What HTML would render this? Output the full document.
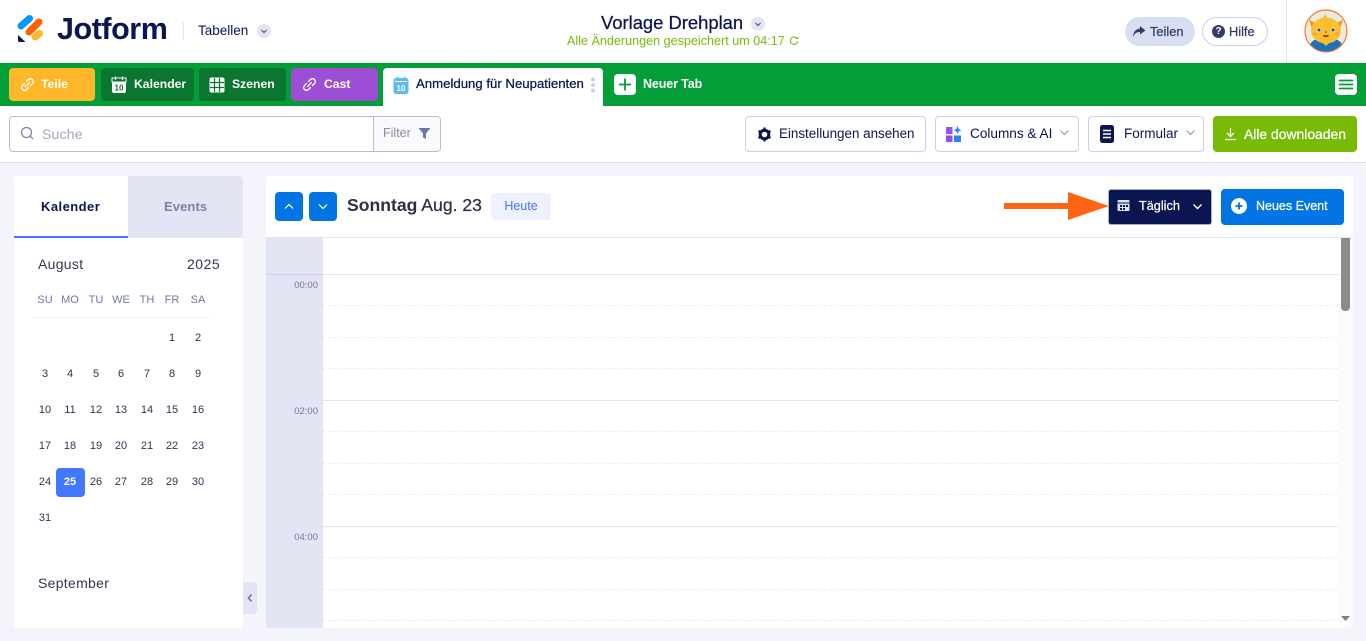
<!DOCTYPE html>
<html><head><meta charset="utf-8"><style>
*{box-sizing:border-box}
html,body{margin:0;padding:0;width:1366px;height:641px;overflow:hidden;background:#f3f4fc;font-family:"Liberation Sans",sans-serif;color:#0a1551}
.a{position:absolute}
.t{position:absolute;white-space:nowrap}
.m{-webkit-text-stroke:.25px currentColor}
.tab{position:absolute;top:68px;height:33px;border-radius:4px}
.tl{position:absolute;top:77px;line-height:14px;font-size:12.2px;font-weight:bold;color:#fff;white-space:nowrap}
.btn{position:absolute;top:116px;height:36px;background:#fff;border:1px solid #c8ceed;border-radius:4px}
.h{position:absolute;left:323px;width:1015px;height:1px;background:#dfe2f2}
.d{position:absolute;left:323px;width:1015px;height:0;border-top:1px dashed #eceef4}
.c{position:absolute;width:26px;text-align:center;font-size:11px;line-height:14px;color:#2f3450}
.w{position:absolute;top:293px;width:30px;text-align:center;font-size:11px;line-height:14px;color:#6f76a7}
.hr{position:absolute;left:283px;width:35px;margin-top:1px;text-align:right;font-size:9.5px;line-height:12px;color:#6f76a7}
</style></head><body>
<div class="a" style="left:0;top:0;width:1366px;height:63px;background:#fff"></div>
<svg class="a" style="left:14px;top:12px" width="34" height="34" viewBox="14 12 34 34">
<g fill="none" stroke-linecap="round" stroke-width="7"><path d="M21 26L29.500 18.500" stroke="#0099ff"/><path d="M29 32L39 22" stroke="#ff6100"/><path d="M35 37L39.500 33.500" stroke="#ffb629"/></g>
<path d="M18 35L25.500 42H19.500A1.500 1.500 0 0 1 18 40.500Z" fill="#0a1551"/></svg>
<div class="t" style="left:57px;top:11px;font-size:30.500px;line-height:36px;font-weight:bold;letter-spacing:-.45px;color:#0a1551">Jotform</div>
<div class="a" style="left:183px;top:22px;width:1px;height:18px;background:#e3e5f5"></div>
<div class="t" style="left:198px;top:23px;font-size:13.500px;line-height:16px;color:#0a1551">Tabellen</div>
<div class="a" style="left:257px;top:24px;width:14px;height:14px;border-radius:50%;background:#e3e5f5"></div>
<svg class="a" style="left:257px;top:24px" width="14" height="14"><path d="M4.500 6L7 8.500L9.500 6" fill="none" stroke="#4c5478" stroke-width="1.200"/></svg>

<div class="t m" style="left:601px;top:13px;font-size:18.400px;line-height:20px;color:#0a1551">Vorlage Drehplan</div>
<div class="a" style="left:751px;top:17px;width:14px;height:14px;border-radius:50%;background:#e3e5f5"></div>
<svg class="a" style="left:751px;top:17px" width="14" height="14"><path d="M4.500 6L7 8.500L9.500 6" fill="none" stroke="#4c5478" stroke-width="1.200"/></svg>
<div class="t" style="left:567px;top:34px;font-size:12.600px;line-height:14px;color:#78bb07">Alle Änderungen gespeichert um 04:17</div>
<svg class="a" style="left:789px;top:36px" width="10" height="10"><path d="M8 2.600A3.700 3.700 0 1 0 8.600 5.500" fill="none" stroke="#78bb07" stroke-width="1"/><path d="M6.500 2.600H9V0.600" fill="none" stroke="#78bb07" stroke-width=".8"/></svg>

<div class="a" style="left:1125px;top:17px;width:70px;height:29px;border-radius:15px;background:#dadef3"></div>
<svg class="a" style="left:1132px;top:25px" width="14" height="13"><path d="M8 1L13.500 5.500L8 9.500V7C5 7 2.500 8 1 12C1 7.500 3.500 4 8 3.500Z" fill="#343c6a"/></svg>
<div class="t m" style="left:1150px;top:24px;font-size:12.800px;line-height:15px;color:#343c6a">Teilen</div>
<div class="a" style="left:1202px;top:17px;width:66px;height:29px;border-radius:15px;background:#fff;border:1px solid #c8ceed"></div>
<div class="a" style="left:1212px;top:25px;width:13px;height:13px;border-radius:50%;background:#343c6a;color:#fff;font-size:10px;line-height:13px;text-align:center;font-weight:bold">?</div>
<div class="t m" style="left:1229px;top:24px;font-size:12.800px;line-height:15px;color:#343c6a">Hilfe</div>
<div class="a" style="left:1286px;top:0;width:1px;height:63px;background:#e3e5f0"></div>
<svg class="a" style="left:1304px;top:9px" width="44" height="44" viewBox="0 0 44 44">
<defs><clipPath id="av"><circle cx="22" cy="22" r="20.500"/></clipPath></defs>
<circle cx="22" cy="22" r="21" fill="#e9ebdf" stroke="#f57a2c" stroke-width="1.200"/>
<g clip-path="url(#av)"><path d="M4 44C4 33 10 29 22 29C34 29 40 33 40 44Z" fill="#1c71b8"/>
<path d="M5 11L14 15L9 23ZM39 11L30 15L35 23Z" fill="#f7931e"/><path d="M21 5L25 12L18 12Z" fill="#f7b52c"/>
<ellipse cx="22" cy="21.500" rx="15" ry="13" fill="#fbbf2f"/>
<path d="M18 33L22 37L26 33Z" fill="#fbbf2f"/>
<circle cx="15" cy="21" r="2.200" fill="#d8d8d0"/><circle cx="29" cy="21" r="2.200" fill="#d8d8d0"/><circle cx="15" cy="21" r="1.400" fill="#40404a"/><circle cx="29" cy="21" r="1.400" fill="#40404a"/>
<ellipse cx="11" cy="25" rx="2" ry="1.500" fill="#f7a030"/><ellipse cx="33" cy="25" rx="2" ry="1.500" fill="#f7a030"/>
<path d="M19 26H25C25 29 19 29 19 26Z" fill="#a2431a"/><circle cx="22" cy="23" r=".8" fill="#40404a"/></g></svg>

<div class="a" style="left:0;top:63px;width:1366px;height:43px;background:#049e38"></div>
<div class="tab" style="left:9px;width:86px;background:#ffb629"></div>
<div class="tab" style="left:101px;width:93px;background:#0a7630"></div>
<div class="tab" style="left:199px;width:87px;background:#0a7630"></div>
<div class="tab" style="left:291px;width:87px;background:#9c4ed4"></div>
<div class="a" style="left:383px;top:68px;width:220px;height:38px;background:#fff;border-radius:4px 4px 0 0"></div>
<svg class="a" style="left:20px;top:77px" width="15" height="15" viewBox="0 0 15 15"><g fill="none" stroke="#fff" stroke-width="1.300" stroke-linecap="round"><path d="M6.500 4.500L8.500 2.500A2.800 2.800 0 0 1 12.500 6.500L10.500 8.500"/><path d="M8.500 10.500L6.500 12.500A2.800 2.800 0 0 1 2.500 8.500L4.500 6.500"/><path d="M5.500 9.500L9.500 5.500"/></g></svg>
<div class="tl" style="left:41px">Teile</div>
<svg class="a" style="left:111px;top:76px" width="16" height="17" viewBox="0 0 16 17"><rect x="1" y="2" width="14" height="15" rx="2" fill="#fff"/><rect x="1" y="2" width="14" height="4" fill="#0a7630" stroke="#fff" stroke-width="1"/><path d="M4.500 0.500V4M11.500 0.500V4" stroke="#fff" stroke-width="1.200"/><text x="8" y="14.500" text-anchor="middle" font-size="8" font-weight="bold" font-family="Liberation Sans" fill="#0a7630">10</text></svg>
<div class="tl" style="left:134px">Kalender</div>
<svg class="a" style="left:209px;top:77px" width="16" height="16" viewBox="0 0 16 16"><rect x=".5" y=".5" width="15" height="15" rx="2" fill="#fff"/><path d="M5.500 1V15M10.500 1V15M1 5.500H15M1 10.500H15" stroke="#0a7630" stroke-width="1.200"/></svg>
<div class="tl" style="left:232px">Szenen</div>
<svg class="a" style="left:302px;top:77px" width="15" height="15" viewBox="0 0 15 15"><g fill="none" stroke="#fff" stroke-width="1.300" stroke-linecap="round"><path d="M6.500 4.500L8.500 2.500A2.800 2.800 0 0 1 12.500 6.500L10.500 8.500"/><path d="M8.500 10.500L6.500 12.500A2.800 2.800 0 0 1 2.500 8.500L4.500 6.500"/><path d="M5.500 9.500L9.500 5.500"/></g></svg>
<div class="tl" style="left:324px">Cast</div>
<svg class="a" style="left:393px;top:76px" width="16" height="18" viewBox="0 0 16 18"><rect x="0.500" y="2" width="15" height="16" rx="2.500" fill="#5cbcf2"/><rect x="2" y="5" width="12" height="1" fill="#fff"/><path d="M4.500 0.500V4M11.500 0.500V4" stroke="#5cbcf2" stroke-width="1.400"/><text x="8" y="15" text-anchor="middle" font-size="8" font-weight="bold" font-family="Liberation Sans" fill="#fff">10</text></svg>
<div class="t m" style="left:416px;top:77px;font-size:13.200px;line-height:14px;color:#0a1551">Anmeldung für Neupatienten</div>
<svg class="a" style="left:590px;top:77px" width="6" height="16"><circle cx="3" cy="2.500" r="2" fill="#c8ceed"/><circle cx="3" cy="8" r="2" fill="#c8ceed"/><circle cx="3" cy="13.500" r="2" fill="#c8ceed"/></svg>
<div class="a" style="left:614px;top:74px;width:22px;height:21px;border-radius:4px;background:#fff"></div>
<svg class="a" style="left:614px;top:74px" width="22" height="21"><path d="M11 4.500V16.500M5 10.500H17" stroke="#049e38" stroke-width="1.800"/></svg>
<div class="tl" style="left:643px;font-size:12.500px;letter-spacing:-.12px">Neuer Tab</div>
<div class="a" style="left:1335px;top:74px;width:22px;height:21px;border-radius:4px;background:#fff"></div>
<svg class="a" style="left:1335px;top:74px" width="22" height="21"><path d="M4.500 6.500H17.500M4.500 10.500H17.500M4.500 14.500H17.500" stroke="#049e38" stroke-width="1.800" stroke-linecap="round"/></svg>

<div class="a" style="left:0;top:106px;width:1366px;height:57px;background:#fff;border-bottom:1px solid #dcdee8"></div>
<div class="a" style="left:9px;top:116px;width:432px;height:36px;background:#fff;border:1px solid #b8bbd0;border-radius:4px;overflow:hidden"><div class="a" style="left:363px;top:0;width:68px;height:34px;background:#fafafd;border-left:1px solid #b8bbd0"></div></div>
<svg class="a" style="left:20px;top:126px" width="15" height="15"><circle cx="6.500" cy="6.500" r="5" fill="none" stroke="#7d84ad" stroke-width="1.300"/><path d="M10 10L13 13" stroke="#7d84ad" stroke-width="1.300"/></svg>
<div class="t" style="left:42px;top:126px;font-size:14px;line-height:16px;color:#a4a6b8;letter-spacing:.2px">Suche</div>
<div class="t" style="left:383px;top:126px;font-size:12.500px;line-height:15px;color:#8a8da3">Filter</div>
<svg class="a" style="left:418px;top:127px" width="13" height="13"><path d="M.5 1H12.500L8 6.500V12L5 10.500V6.500Z" fill="#6f76a7"/></svg>

<div class="btn" style="left:745px;width:181px"></div>
<svg class="a" style="left:757px;top:127px" width="15" height="15" viewBox="0 0 15 15"><circle cx="7.500" cy="7.500" r="4.300" fill="none" stroke="#0a1551" stroke-width="3"/><path d="M7.500 .5V3M7.500 12V14.500M1.500 4L3.500 5.200M11.500 9.800L13.500 11M1.500 11L3.500 9.800M11.500 5.200L13.500 4" stroke="#0a1551" stroke-width="2.200"/></svg>
<div class="t" style="left:779px;top:126px;font-size:13.400px;line-height:16px;color:#0a1551">Einstellungen ansehen</div>
<div class="btn" style="left:935px;width:144px"></div>
<svg class="a" style="left:946px;top:126px" width="16" height="16" viewBox="0 0 16 16"><rect x="0" y="1" width="6.500" height="7" fill="#9b51f0"/><rect x="0" y="9.500" width="6.500" height="6.500" fill="#8f4ff0"/><rect x="8" y="9.500" width="7" height="6.500" fill="#2f7ef2"/><path d="M11.500 0L12.800 3.200L15.500 4.200L12.800 5.200L11.500 8L10.200 5.200L7.500 4.200L10.200 3.200Z" fill="#2f7ef2"/></svg>
<div class="t" style="left:970px;top:126px;font-size:13.600px;line-height:16px;color:#0a1551">Columns &amp; AI</div>
<svg class="a" style="left:1059px;top:129px" width="11" height="8"><path d="M1.500 1.500L5.500 5.500L9.500 1.500" fill="none" stroke="#9a9eb5" stroke-width="1.200"/></svg>
<div class="btn" style="left:1088px;width:116px"></div>
<svg class="a" style="left:1100px;top:125px" width="14" height="18"><rect width="14" height="18" rx="2.500" fill="#0a1551"/><path d="M3 5.500H11M3 9H11M3 12.500H11" stroke="#fff" stroke-width="1.500"/></svg>
<div class="t" style="left:1124px;top:126px;font-size:13.500px;line-height:16px;color:#0a1551">Formular</div>
<svg class="a" style="left:1185px;top:129px" width="11" height="8"><path d="M1.500 1.500L5.500 5.500L9.500 1.500" fill="none" stroke="#9a9eb5" stroke-width="1.200"/></svg>
<div class="a" style="left:1213px;top:116px;width:144px;height:36px;border-radius:4px;background:#78bb07"></div>
<svg class="a" style="left:1224px;top:127px" width="13" height="14"><path d="M6.500 1V9M3 6L6.500 9.500L10 6M1 12.500H12" fill="none" stroke="#fff" stroke-width="1.200"/></svg>
<div class="t m" style="left:1244px;top:126px;font-size:13.900px;line-height:16px;color:#fff">Alle downloaden</div>

<div class="a" style="left:14px;top:176px;width:229px;height:452px;background:#fff;border-radius:4px"></div>
<div class="a" style="left:128px;top:176px;width:115px;height:62px;background:#e3e5f5;border-radius:0 4px 0 0"></div>
<div class="a" style="left:14px;top:236px;width:114px;height:2px;background:#4277ff"></div>
<div class="t" style="left:41px;top:199px;font-size:13px;line-height:15px;font-weight:bold;letter-spacing:.45px;color:#0a1551">Kalender</div>
<div class="t" style="left:164px;top:199px;font-size:13px;line-height:15px;font-weight:bold;letter-spacing:.1px;color:#7d80a8">Events</div>
<div class="t" style="left:38px;top:256px;font-size:14px;line-height:16px;letter-spacing:.3px;color:#343850">August</div>
<div class="t" style="left:187px;top:256px;font-size:14px;line-height:16px;letter-spacing:.5px;color:#343850">2025</div>
<div class="w" style="left:30px">SU</div><div class="w" style="left:55px">MO</div><div class="w" style="left:81px">TU</div><div class="w" style="left:106px">WE</div><div class="w" style="left:132px">TH</div><div class="w" style="left:157px">FR</div><div class="w" style="left:183px">SA</div>
<div class="a" style="left:32px;top:317px;width:179px;height:1px;background:#f1f2f9"></div>

<div class="c" style="left:159px;top:331px">1</div><div class="c" style="left:185px;top:331px">2</div>
<div class="c" style="left:32px;top:367px">3</div><div class="c" style="left:57px;top:367px">4</div><div class="c" style="left:83px;top:367px">5</div><div class="c" style="left:108px;top:367px">6</div><div class="c" style="left:134px;top:367px">7</div><div class="c" style="left:159px;top:367px">8</div><div class="c" style="left:185px;top:367px">9</div>
<div class="c" style="left:32px;top:403px">10</div><div class="c" style="left:57px;top:403px">11</div><div class="c" style="left:83px;top:403px">12</div><div class="c" style="left:108px;top:403px">13</div><div class="c" style="left:134px;top:403px">14</div><div class="c" style="left:159px;top:403px">15</div><div class="c" style="left:185px;top:403px">16</div>
<div class="c" style="left:32px;top:439px">17</div><div class="c" style="left:57px;top:439px">18</div><div class="c" style="left:83px;top:439px">19</div><div class="c" style="left:108px;top:439px">20</div><div class="c" style="left:134px;top:439px">21</div><div class="c" style="left:159px;top:439px">22</div><div class="c" style="left:185px;top:439px">23</div>
<div class="a" style="left:56px;top:468px;width:29px;height:29px;border-radius:4px;background:#4277ff"></div>
<div class="c" style="left:32px;top:475px">24</div><div class="c" style="left:57px;top:475px;color:#fff;font-weight:bold">25</div><div class="c" style="left:83px;top:475px">26</div><div class="c" style="left:108px;top:475px">27</div><div class="c" style="left:134px;top:475px">28</div><div class="c" style="left:159px;top:475px">29</div><div class="c" style="left:185px;top:475px">30</div>
<div class="c" style="left:32px;top:511px">31</div>
<div class="t" style="left:38px;top:575px;font-size:14px;line-height:16px;letter-spacing:.3px;color:#343850">September</div>
<div class="a" style="left:243px;top:582px;width:14px;height:32px;background:#e3e5f5;border-radius:0 4px 4px 0"></div>
<svg class="a" style="left:246px;top:593px" width="8" height="10"><path d="M5.500 1.500L2.500 5L5.500 8.500" fill="none" stroke="#6f76a7" stroke-width="1.600"/></svg>

<div class="a" style="left:266px;top:176px;width:1087px;height:452px;background:#fff;border-radius:4px 0 0 4px"></div>
<div class="a" style="left:266px;top:237px;width:1087px;height:1px;background:#e3e5f5"></div>
<div class="a" style="left:275px;top:192px;width:28px;height:29px;border-radius:4px;background:#0075e3"></div>
<svg class="a" style="left:275px;top:192px" width="28" height="29"><path d="M10 16.500L14 12.500L18 16.500" fill="none" stroke="#fff" stroke-width="1.200"/></svg>
<div class="a" style="left:309px;top:192px;width:28px;height:29px;border-radius:4px;background:#0075e3"></div>
<svg class="a" style="left:309px;top:192px" width="28" height="29"><path d="M10 12.500L14 16.500L18 12.500" fill="none" stroke="#fff" stroke-width="1.200"/></svg>
<div class="t" style="left:347px;top:195px;font-size:17.600px;line-height:21px;color:#2b3045"><b>Sonntag</b> <span class="m">Aug. 23</span></div>
<div class="a" style="left:491px;top:193px;width:60px;height:27px;border-radius:4px;background:#edf2fe;color:#4277ff;font-size:12.500px;line-height:27px;text-align:center">Heute</div>
<svg class="a" style="left:1004px;top:192px" width="105" height="28"><path d="M0 11H64V0L105 14L64 28V17H0Z" fill="#ff6513"/></svg>
<div class="a" style="left:1108px;top:189px;width:104px;height:36px;border-radius:3px;background:#0a1551;border:1px solid #a9adc4"></div>
<svg class="a" style="left:1117px;top:199px" width="13" height="13"><rect x=".5" y="1" width="12" height="11" rx="1" fill="#dfe1ee"/><path d="M.5 4H12.500" stroke="#0a1551"/><path d="M3 6H5V8H3ZM6 6H8V8H6ZM9 6H11V8H9ZM3 9H5V11H3ZM6 9H8V11H6Z" fill="#0a1551"/></svg>
<div class="t m" style="left:1139px;top:199px;font-size:12.700px;line-height:15px;color:#fff">Täglich</div>
<svg class="a" style="left:1192px;top:203px" width="11" height="8"><path d="M1.500 1.500L5.500 5.500L9.500 1.500" fill="none" stroke="#fff" stroke-width="1.400"/></svg>
<div class="a" style="left:1221px;top:189px;width:123px;height:36px;border-radius:4px;background:#0075e3"></div>
<div class="a" style="left:1231px;top:198px;width:16px;height:16px;border-radius:50%;background:#fff"></div>
<svg class="a" style="left:1231px;top:198px" width="16" height="16"><path d="M8 4.500V11.500M4.500 8H11.500" stroke="#0075e3" stroke-width="1.800"/></svg>
<div class="t m" style="left:1256px;top:199px;font-size:12.500px;line-height:15px;color:#fff">Neues Event</div>

<div class="a" style="left:266px;top:238px;width:57px;height:390px;background:#e3e5f5;border-radius:0 0 0 4px"></div>
<div class="a" style="left:266px;top:274px;width:57px;height:1px;background:#c8d4f5"></div>
<div class="hr" style="top:279px">00:00</div><div class="hr" style="top:405px">02:00</div><div class="hr" style="top:531px">04:00</div>
<div class="h" style="top:274px"></div><div class="d" style="top:305px"></div><div class="d" style="top:337px"></div><div class="d" style="top:368px"></div>
<div class="h" style="top:400px"></div><div class="d" style="top:431px"></div><div class="d" style="top:463px"></div><div class="d" style="top:494px"></div>
<div class="h" style="top:526px"></div><div class="d" style="top:557px"></div><div class="d" style="top:589px"></div><div class="d" style="top:620px"></div>
<div class="a" style="left:1338px;top:238px;width:15px;height:390px;background:#fbfbfb"></div>
<div class="a" style="left:1341px;top:238px;width:9px;height:73px;background:#8c8c8c;border-radius:0 0 4px 4px"></div>
<svg class="a" style="left:1341px;top:616px" width="9" height="6"><path d="M0 0H9L4.500 5Z" fill="#7f7f7f"/></svg>
</body></html>
